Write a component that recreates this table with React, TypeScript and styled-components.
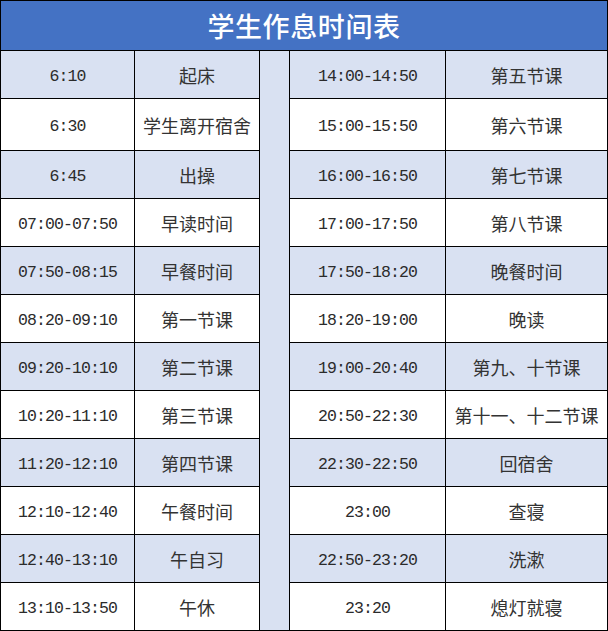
import styled, { createGlobalStyle } from 'styled-components';

const GlobalStyle = createGlobalStyle`
  html, body {
    margin: 0;
    padding: 0;
    background: #ffffff;
  }
`;

const Sheet = styled.div`
  display: grid;
  grid-template-columns: 133px 124px 29px 155px 161px;
  grid-template-rows: 49px 47px 51px repeat(10, 47px);
  gap: 1px;
  padding: 1px;
  width: 608px;
  box-sizing: border-box;
  background: #000000;
`;

const Title = styled.div`
  grid-column: 1 / -1;
  display: flex;
  align-items: center;
  justify-content: center;
  background: #4472c4;
  color: #ffffff;
  font-family: 'Noto Sans CJK SC', sans-serif;
  font-size: 27px;
  font-weight: 500;
  letter-spacing: 0.6px;
`;

const Divider = styled.div`
  grid-column: 3;
  grid-row: 2 / -1;
  background: #d9e1f2;
`;

const Row = styled.div<{ $shaded: boolean }>`
  display: contents;
  --cell-bg: ${p => (p.$shaded ? '#d9e1f2' : '#ffffff')};
`;

const Cell = styled.div`
  display: flex;
  align-items: center;
  justify-content: center;
  background: var(--cell-bg);
  color: #2b2b2b;
  white-space: nowrap;
`;

const TimeCell = styled(Cell)`
  font-family: 'Liberation Mono', monospace;
  font-size: 16.5px;
  letter-spacing: -0.9px;
  padding-top: 4px;
`;

const TaskCell = styled(Cell)`
  font-family: 'Noto Sans CJK SC', sans-serif;
  font-size: 18px;
  color: #333333;
`;

const rows: [string, string, string, string][] = [
  ['6:10', '起床', '14:00-14:50', '第五节课'],
  ['6:30', '学生离开宿舍', '15:00-15:50', '第六节课'],
  ['6:45', '出操', '16:00-16:50', '第七节课'],
  ['07:00-07:50', '早读时间', '17:00-17:50', '第八节课'],
  ['07:50-08:15', '早餐时间', '17:50-18:20', '晚餐时间'],
  ['08:20-09:10', '第一节课', '18:20-19:00', '晚读'],
  ['09:20-10:10', '第二节课', '19:00-20:40', '第九、十节课'],
  ['10:20-11:10', '第三节课', '20:50-22:30', '第十一、十二节课'],
  ['11:20-12:10', '第四节课', '22:30-22:50', '回宿舍'],
  ['12:10-12:40', '午餐时间', '23:00', '查寝'],
  ['12:40-13:10', '午自习', '22:50-23:20', '洗漱'],
  ['13:10-13:50', '午休', '23:20', '熄灯就寝'],
];

const Schedule = () => {
  return (
    <Sheet>
      <Title>学生作息时间表</Title>
      <Divider />
      {rows.map(([time, task, rTime, rTask], i) => (
        <Row key={i} $shaded={i % 2 === 0}>
          <TimeCell>{time}</TimeCell>
          <TaskCell>{task}</TaskCell>
          <TimeCell>{rTime}</TimeCell>
          <TaskCell>{rTask}</TaskCell>
        </Row>
      ))}
    </Sheet>
  );
};

export default function App() {
  return (
    <>
      <GlobalStyle />
      <Schedule />
    </>
  );
}
